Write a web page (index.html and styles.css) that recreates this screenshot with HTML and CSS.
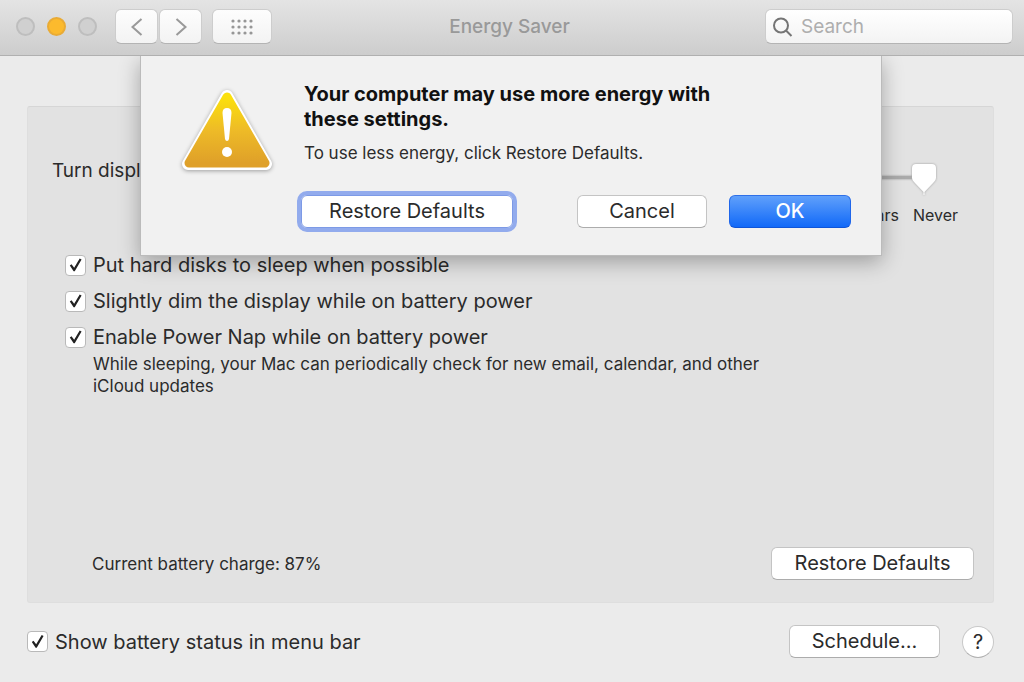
FILE: index.html
```html
<!DOCTYPE html>
<html lang="en">
<head>
  <meta charset="UTF-8" />
  <meta name="viewport" content="width=device-width, initial-scale=1.0"/>
  <title>Energy Saver</title>
  <link rel="stylesheet" href="styles.css">
</head>
<body>
  <div class="window">
    <header class="toolbar">
      <div class="lights">
        <button class="light" aria-label="Close"></button>
        <button class="light minimize" aria-label="Minimize"></button>
        <button class="light" aria-label="Zoom"></button>
      </div>
      <div class="nav">
        <button class="tool-btn" aria-label="Back">
          <svg width="14" height="20" viewBox="0 0 14 20"><path d="M11.500 2 L2.500 10 L11.500 18"/></svg>
        </button>
        <button class="tool-btn" aria-label="Forward">
          <svg width="14" height="20" viewBox="0 0 14 20"><path d="M2.500 2 L11.500 10 L2.500 18"/></svg>
        </button>
      </div>
      <button class="tool-btn show-all" aria-label="Show All">
        <svg width="24" height="18" viewBox="0 0 24 18">
          <g class="dots">
            <circle cx="3" cy="3" r="1.6"/><circle cx="9" cy="3" r="1.6"/><circle cx="15" cy="3" r="1.6"/><circle cx="21" cy="3" r="1.6"/>
            <circle cx="3" cy="9" r="1.6"/><circle cx="9" cy="9" r="1.6"/><circle cx="15" cy="9" r="1.6"/><circle cx="21" cy="9" r="1.6"/>
            <circle cx="3" cy="15" r="1.6"/><circle cx="9" cy="15" r="1.6"/><circle cx="15" cy="15" r="1.6"/><circle cx="21" cy="15" r="1.6"/>
          </g>
        </svg>
      </button>
      <h1 class="title">Energy Saver</h1>
      <label class="search">
        <svg width="20" height="20" viewBox="0 0 20 20"><circle cx="8" cy="8.500" r="7"/><path d="M13 13.500 L18.500 19"/></svg>
        <input type="search" placeholder="Search" aria-label="Search">
      </label>
    </header>

    <main class="content">
      <section class="panel">
        <div class="slider-row">
          <label for="display-off">Turn display off after:</label>
          <div class="slider">
            <input type="range" id="display-off" min="0" max="100" value="100">
            <div class="ticks"><span>1 min</span><span class="hrs">3 hrs</span><span>Never</span></div>
          </div>
        </div>

        <div class="options">
          <label class="check"><input type="checkbox" checked>Put hard disks to sleep when possible</label>
          <label class="check"><input type="checkbox" checked>Slightly dim the display while on battery power</label>
          <label class="check"><input type="checkbox" checked>Enable Power Nap while on battery power</label>
          <p class="note">While sleeping, your Mac can periodically check for new email, calendar, and other iCloud updates</p>
        </div>

        <div class="panel-footer">
          <span class="charge">Current battery charge: 87%</span>
          <button class="btn wide">Restore Defaults</button>
        </div>
      </section>

      <footer class="footer">
        <label class="check"><input type="checkbox" checked>Show battery status in menu bar</label>
        <div class="footer-actions">
          <button class="btn schedule">Schedule...</button>
          <button class="help" aria-label="Help">?</button>
        </div>
      </footer>

      <!-- Warning sheet -->
      <div class="sheet" role="dialog" aria-labelledby="sheet-title">
        <svg class="warning" width="96" height="90" viewBox="0 0 96 90">
          <defs>
            <linearGradient id="amber" x1="0" y1="0" x2="0" y2="1">
              <stop offset="0" stop-color="#fbe00c"/>
              <stop offset="0.5" stop-color="#eebb27"/>
              <stop offset="1" stop-color="#dfa029"/>
            </linearGradient>
          </defs>
          <path class="warning-edge" d="M48 14 L87 82 H9 Z"/>
          <path class="warning-fill" d="M48 15 L86 81 H10 Z"/>
          <path fill="#fff" d="M43.500 31 Q43.500 26 48 26 Q52.500 26 52.500 31 L50 57 Q49.500 59 48 59 Q46.500 59 46 57 Z"/>
          <circle fill="#fff" cx="48" cy="70" r="5"/>
        </svg>
        <div class="sheet-body">
          <h2 id="sheet-title">Your computer may use more energy with these settings.</h2>
          <p>To use less energy, click Restore Defaults.</p>
          <div class="sheet-actions">
            <button class="btn focused">Restore Defaults</button>
            <button class="btn cancel">Cancel</button>
            <button class="btn primary">OK</button>
          </div>
        </div>
      </div>
    </main>
  </div>
</body>
</html>
```
FILE: styles.css
```css
* { box-sizing: border-box; }
body {
  margin: 0;
  font-family: Inter, "Liberation Sans", sans-serif;
  font-size: 20px;
  line-height: 24px;
  color: #2b2b2b;
  background: #ebebeb;
}
button, input { font: inherit; color: inherit; }
h1, h2, p { margin: 0; }
.window {
  display: flex;
  flex-direction: column;
  min-height: 100vh;
}

/* Toolbar */
.toolbar {
  display: flex;
  align-items: center;
  height: 56px;
  padding: 0 11px 2px 16px;
  background: linear-gradient(#e4e4e4, #cdcdcd);
  border-bottom: 1px solid #b0b0b0;
  font-size: 19px;
}
.lights { display: flex; gap: 12px; }
.light {
  width: 19px;
  height: 19px;
  padding: 0;
  border: 2px solid #bebebe;
  border-radius: 50%;
  background: #d0d0d0;
}
.light.minimize { background: #fcba2d; border-color: #e9ab35; }
.nav { display: flex; gap: 1px; margin-left: 18px; }
.tool-btn {
  display: flex;
  align-items: center;
  justify-content: center;
  width: 43px;
  height: 35px;
  padding: 0;
  border: 1px solid #cdcdcd;
  border-bottom-color: #b4b4b4;
  border-radius: 6px;
  background: linear-gradient(#fdfdfd, #f3f3f3);
}
.tool-btn svg { fill: none; stroke: #999; stroke-width: 2; }
.tool-btn .dots { fill: #969696; stroke: none; }
.show-all { width: 60px; margin-left: 10px; }
.title {
  flex: 1;
  padding-right: 18px;
  font-size: 19px;
  font-weight: 500;
  text-align: center;
  color: #999;
}
.search {
  display: flex;
  align-items: center;
  gap: 8px;
  width: 248px;
  height: 35px;
  padding: 0 7px;
  border: 1px solid #cdcdcd;
  border-bottom-color: #b4b4b4;
  border-radius: 6px;
  background: linear-gradient(#fff, #f3f3f3);
}
.search svg { flex: none; fill: none; stroke: #757575; stroke-width: 2; }
.search input {
  width: 100%;
  padding: 0;
  border: none;
  outline: none;
  background: none;
}
.search input::placeholder { color: #aeaeae; }

/* Content */
.content {
  position: relative;
  display: flex;
  flex: 1;
  flex-direction: column;
  padding: 50px 30px 0 27px;
}
.panel {
  display: flex;
  flex: 1;
  flex-direction: column;
  padding: 52px 19px 22px 24px;
  background: #e2e2e2;
  border: 1px solid #dedede;
  border-top-color: #d6d6d6;
  border-radius: 3px;
}
.slider-row {
  display: flex;
  gap: 16px;
  padding-right: 16px;
  font-size: 19px;
}
.slider { flex: 1; padding-top: 4px; }
.slider input {
  display: block;
  appearance: none;
  width: calc(100% - 21px);
  height: 34px;
  margin: 0;
  background: linear-gradient(#aaa, #aaa) 0 13px / calc(100% - 12px) 3px no-repeat;
  filter: drop-shadow(0 0 1px #999);
}
.slider input::-webkit-slider-thumb {
  appearance: none;
  width: 26px;
  height: 34px;
  background: #fff;
  clip-path: path("M5 1 H21 Q25 1 25 5 V15 Q25 17 23 19 L13.500 29 V32 H12.500 V29 L3 19 Q1 17 1 15 V5 Q1 1 5 1 Z");
}
.ticks {
  display: flex;
  justify-content: space-between;
  padding-top: 7px;
  font-size: 16px;
  line-height: 22px;
}
.hrs { margin-left: auto; margin-right: 14px; }
.options {
  display: flex;
  flex-direction: column;
  gap: 12px;
  padding: 27px 0 0 13px;
}
.check {
  display: flex;
  align-items: center;
  gap: 7px;
}
.check input {
  appearance: none;
  flex: none;
  width: 21px;
  height: 21px;
  margin: 0;
  border: 1px solid #b9b9b9;
  border-radius: 4px;
  background: #fff;
}
.check input:checked::before {
  content: "";
  display: block;
  width: 19px;
  height: 19px;
  background: #222;
  clip-path: polygon(20% 53%, 29% 46%, 43% 65%, 72% 16%, 82% 21%, 46% 83%, 40% 83%);
}
.note {
  max-width: 710px;
  margin-top: -8px;
  padding-left: 28px;
  font-size: 17px;
  line-height: 22px;
}
.panel-footer {
  display: flex;
  align-items: center;
  justify-content: space-between;
  margin-top: auto;
  padding-left: 40px;
}
.charge { font-size: 17px; }
.btn {
  height: 33px;
  padding: 0 8px 2px;
  border: 1px solid #c4c4c4;
  border-bottom-color: #acacac;
  border-radius: 6px;
  background: #fff;
  white-space: nowrap;
}
.wide { width: 203px; }
.footer {
  display: flex;
  align-items: center;
  justify-content: space-between;
  height: 79px;
  padding-bottom: 2px;
}
.footer-actions {
  display: flex;
  align-items: center;
  gap: 22px;
}
.schedule { width: 151px; }
.help {
  width: 32px;
  height: 32px;
  padding: 0;
  border: 1px solid #c8c8c8;
  border-bottom-color: #b0b0b0;
  border-radius: 50%;
  background: #fff;
}

/* Sheet slides out from under the toolbar */
.sheet {
  position: absolute;
  top: 0;
  left: 0;
  right: 2px;
  display: flex;
  gap: 29px;
  width: 742px;
  max-width: 100%;
  margin: 0 auto;
  padding: 26px 30px 27px 38px;
  background: #f1f1f1;
  border: 1px solid #bbb;
  border-top: none;
  box-shadow: 0 6px 20px rgba(0,0,0,0.3);
  clip-path: inset(0 -40px -40px -40px);
}
.warning { flex: none; filter: drop-shadow(0 1px 2px rgba(0,0,0,0.35)); }
.warning-edge { fill: #fff; stroke: #fff; stroke-width: 12; stroke-linejoin: round; }
.warning-fill { fill: url(#amber); stroke: url(#amber); stroke-width: 9; stroke-linejoin: round; }
.sheet-body { flex: 1; }
.sheet h2 {
  max-width: 440px;
  font-size: 20px;
  font-weight: 700;
  line-height: 25px;
  color: #111;
}
.sheet p {
  margin-top: 10px;
  font-size: 17px;
  line-height: 22px;
}
.sheet-actions {
  display: flex;
  gap: 22px;
  margin-top: 31px;
}
.focused {
  width: 212px;
  margin: 0 auto 0 -3px;
  border-color: #7d9ae6;
  outline: 4px solid #92abed;
}
.cancel { width: 130px; }
.primary {
  width: 122px;
  border-color: #2f70e8 #1f66ea #0f55d8;
  background: linear-gradient(#60a0fb, #1169f8);
  color: #fff;
  font-weight: 500;
}
```
